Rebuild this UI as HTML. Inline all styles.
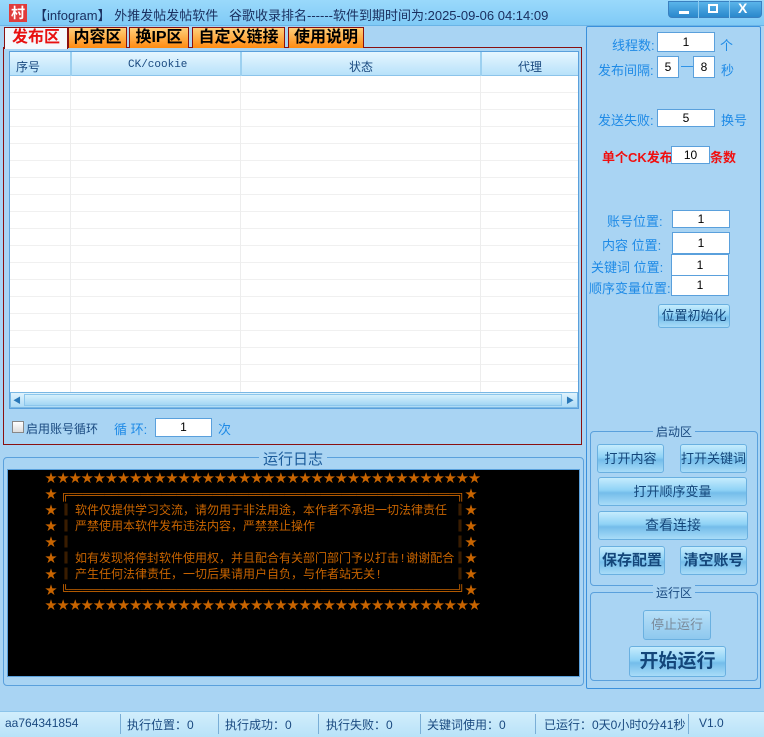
<!DOCTYPE html>
<html><head><meta charset="utf-8"><style>
*{margin:0;padding:0;box-sizing:border-box}
body{width:764px;height:737px;overflow:hidden;background:#a9d4f3;font-family:"Liberation Sans","Noto Sans CJK SC",sans-serif;font-size:12px;position:relative;color:#1a5a9a}
.a{position:absolute;white-space:nowrap}
.title{left:0;top:0;width:764px;height:26px;background:linear-gradient(#9ad9fb,#7fcaf6);border-bottom:1px solid #6ab4e6}
.tab{position:absolute;top:27px;height:21px;background:linear-gradient(#ffcf7a,#ff8a10);border:1px solid #8a1010;border-bottom:none;font-size:16px;font-weight:bold;color:#000;text-align:center;line-height:20px}
.inp{position:absolute;background:#fff;border:1px solid #5aa0dc;text-align:center;color:#000;font-size:12px}
.btn{position:absolute;border:1px solid #6ab0e0;border-radius:3px;background:linear-gradient(#c6ecfd 0%,#8fd2f6 45%,#74bdea 55%,#a8dcf8 100%);color:#14467a;text-align:center;font-size:13px}
.lbl{position:absolute;color:#1e8ae6;font-size:13px;white-space:nowrap}
.grp{position:absolute;border:1px solid #5aa0dc;border-radius:4px}
.log{color:#c86400;font-family:"Liberation Mono","Noto Sans CJK SC",monospace;font-size:12px;position:absolute;white-space:pre;line-height:16px}
.sb{position:absolute;top:714px;height:20px;border-left:1px solid #7aaed6;top:714px}
</style></head><body>
<div class="a title"></div>
<div class="a" style="left:9px;top:4px;width:18px;height:18px;background:#e03c3c;color:#fff;font-weight:bold;font-size:14px;line-height:18px;text-align:center">村</div>
<div class="a" style="left:34px;top:5px;font-size:13px;color:#1a3060">【infogram】 外推发帖发帖软件&nbsp;&nbsp;&nbsp;谷歌收录排名------软件到期时间为:2025-09-06 04:14:09</div>
<div class="a" style="left:668px;top:1px;width:94px;height:17px;background:linear-gradient(#5ab4ea,#2a88cc);border:1px solid #3a80c0;border-radius:0 0 4px 4px"></div>
<div class="a" style="left:698px;top:1px;width:1px;height:17px;background:#8ccaf0"></div>
<div class="a" style="left:729px;top:1px;width:1px;height:17px;background:#8ccaf0"></div>
<div class="a" style="left:679px;top:11px;width:10px;height:3px;background:#fff"></div>
<div class="a" style="left:708px;top:4px;width:10px;height:9px;border:2px solid #fff"></div>
<div class="a" style="left:738px;top:0px;color:#fff;font-weight:bold;font-size:14px">X</div>

<div class="a" style="left:3px;top:47px;width:579px;height:398px;border:1px solid #8a1010"></div>
<div class="tab" style="left:4px;width:64px;background:#f4f8fc;color:#e81010;height:22px">发布区</div>
<div class="tab" style="left:68px;width:59px">内容区</div>
<div class="tab" style="left:129px;width:60px">换IP区</div>
<div class="tab" style="left:192px;width:93px">自定义链接</div>
<div class="tab" style="left:288px;width:76px">使用说明</div>

<div class="a" style="left:9px;top:51px;width:570px;height:358px;background:#fff;border:1px solid #5aa0dc;
background-image:repeating-linear-gradient(#fff 0 16px,#f0f0f0 16px 17px);background-position:0 24px"></div>
<div class="a" style="left:10px;top:52px;width:568px;height:24px;background:linear-gradient(#e6f6ff,#b8e2fa);border-bottom:1px solid #8cc4ea"></div>
<div class="a" style="left:70px;top:52px;width:1px;height:340px;background:#ededed"></div>
<div class="a" style="left:240px;top:52px;width:1px;height:340px;background:#ededed"></div>
<div class="a" style="left:480px;top:52px;width:1px;height:340px;background:#ededed"></div>
<div class="a" style="left:70px;top:52px;width:2px;height:24px;background:#9cd0f0"></div>
<div class="a" style="left:240px;top:52px;width:2px;height:24px;background:#9cd0f0"></div>
<div class="a" style="left:480px;top:52px;width:2px;height:24px;background:#9cd0f0"></div>
<div class="a" style="left:16px;top:58px;color:#1a4a80">序号</div>
<div class="a" style="left:128px;top:59px;color:#1a4a80;font-family:'Liberation Mono',monospace;font-size:11px">CK/cookie</div>
<div class="a" style="left:349px;top:58px;color:#1a4a80">状态</div>
<div class="a" style="left:518px;top:58px;color:#1a4a80">代理</div>
<div class="a" style="left:10px;top:392px;width:568px;height:16px;background:linear-gradient(#dff3fd,#aedbf6);border:1px solid #7ab8e4"></div>
<div class="a" style="left:24px;top:394px;width:538px;height:12px;background:linear-gradient(#d6f0fc,#a4d6f4);border:1px solid #8cc6ec"></div>
<div class="a" style="left:13px;top:395px;font-size:8px;color:#2a78b8">◀</div>
<div class="a" style="left:566px;top:395px;font-size:8px;color:#2a78b8">▶</div>

<div class="a" style="left:12px;top:421px;width:12px;height:12px;border:1px solid #888;background:linear-gradient(#fff,#ddd)"></div>
<div class="a" style="left:26px;top:420px;color:#1a4a80;font-size:12px">启用账号循环</div>
<div class="lbl" style="left:114px;top:419px">循 环:</div>
<div class="inp" style="left:155px;top:418px;width:57px;height:19px;line-height:17px">1</div>
<div class="lbl" style="left:218px;top:419px">次</div>

<div class="grp" style="left:3px;top:457px;width:581px;height:229px"></div>
<div class="a" style="left:259px;top:448px;padding:0 4px;background:#a9d4f3;font-size:15px;color:#1a5a9a">运行日志</div>
<div class="a" style="left:7px;top:469px;width:573px;height:208px;background:#000;border:1px solid #5aa0dc"></div>
<div class="log" style="left:45px;top:471px;letter-spacing:0.1px">★★★★★★★★★★★★★★★★★★★★★★★★★★★★★★★★★★★★</div>
<div class="log" style="left:45px;top:598px;letter-spacing:0.1px">★★★★★★★★★★★★★★★★★★★★★★★★★★★★★★★★★★★★</div>
<div class="log" style="left:45px;top:487px">★
★
★
★
★
★
★</div>
<div class="log" style="left:465px;top:487px">★
★
★
★
★
★
★</div>
<div class="log" style="left:61px;top:487px;font-size:12px">╔══════════════════════════════════════════════════════╗</div>
<div class="log" style="left:61px;top:583px;font-size:12px">╚══════════════════════════════════════════════════════╝</div>
<div class="log" style="left:60px;top:503px">‖
‖
‖
‖
‖</div>
<div class="log" style="left:454px;top:503px">‖
‖
‖
‖
‖</div>
<div class="log" style="left:75px;top:503px">软件仅提供学习交流，请勿用于非法用途，本作者不承担一切法律责任
严禁使用本软件发布违法内容，严禁禁止操作

如有发现将停封软件使用权，并且配合有关部门部门予以打击!谢谢配合
产生任何法律责任，一切后果请用户自负，与作者站无关!</div>

<div class="a" style="left:586px;top:26px;width:175px;height:663px;border:1px solid #3a90dc;border-radius:2px"></div>
<div class="lbl" style="left:612px;top:35px">线程数:</div>
<div class="inp" style="left:657px;top:32px;width:58px;height:20px;line-height:18px">1</div>
<div class="lbl" style="left:720px;top:35px">个</div>
<div class="lbl" style="left:598px;top:60px">发布间隔:</div>
<div class="inp" style="left:657px;top:56px;width:22px;height:22px;line-height:20px">5</div>
<div class="lbl" style="left:681px;top:58px">—</div>
<div class="inp" style="left:693px;top:56px;width:22px;height:22px;line-height:20px">8</div>
<div class="lbl" style="left:721px;top:60px">秒</div>
<div class="lbl" style="left:598px;top:110px">发送失败:</div>
<div class="inp" style="left:657px;top:109px;width:58px;height:18px;line-height:16px">5</div>
<div class="lbl" style="left:721px;top:110px">换号</div>
<div class="a" style="left:602px;top:147px;color:#f01010;font-weight:bold;font-size:13px">单个CK发布</div>
<div class="inp" style="left:671px;top:146px;width:39px;height:18px;line-height:16px">10</div>
<div class="a" style="left:710px;top:147px;color:#f01010;font-weight:bold;font-size:13px">条数</div>
<div class="lbl" style="left:607px;top:211px">账号位置:</div>
<div class="inp" style="left:672px;top:210px;width:58px;height:18px;line-height:16px">1</div>
<div class="lbl" style="left:602px;top:235px">内容 位置:</div>
<div class="inp" style="left:672px;top:232px;width:58px;height:22px;line-height:20px">1</div>
<div class="lbl" style="left:591px;top:257px">关键词 位置:</div>
<div class="inp" style="left:671px;top:254px;width:58px;height:22px;line-height:20px">1</div>
<div class="lbl" style="left:589px;top:278px">顺序变量位置:</div>
<div class="inp" style="left:671px;top:275px;width:58px;height:21px;line-height:19px">1</div>
<div class="btn" style="left:658px;top:304px;width:72px;height:24px;line-height:22px">位置初始化</div>

<div class="grp" style="left:590px;top:431px;width:168px;height:155px"></div>
<div class="a" style="left:653px;top:423px;padding:0 3px;background:#a9d4f3;color:#1a4a80">启动区</div>
<div class="btn" style="left:597px;top:444px;width:67px;height:29px;line-height:27px">打开内容</div>
<div class="btn" style="left:680px;top:444px;width:67px;height:29px;line-height:27px">打开关键词</div>
<div class="btn" style="left:598px;top:477px;width:149px;height:29px;line-height:27px">打开顺序变量</div>
<div class="btn" style="left:598px;top:511px;width:150px;height:29px;line-height:27px;font-size:14px">查看连接</div>
<div class="btn" style="left:599px;top:546px;width:66px;height:29px;line-height:27px;font-weight:bold;font-size:15px">保存配置</div>
<div class="btn" style="left:680px;top:546px;width:67px;height:29px;line-height:27px;font-weight:bold;font-size:15px">清空账号</div>
<div class="grp" style="left:590px;top:592px;width:168px;height:89px"></div>
<div class="a" style="left:653px;top:584px;padding:0 3px;background:#a9d4f3;color:#1a4a80">运行区</div>
<div class="btn" style="left:643px;top:610px;width:68px;height:30px;line-height:28px;color:#7a8a9a;background:linear-gradient(#b8e0f8,#8ec8ee)">停止运行</div>
<div class="btn" style="left:629px;top:646px;width:97px;height:31px;line-height:29px;font-weight:bold;font-size:19px">开始运行</div>

<div class="a" style="left:0;top:711px;width:764px;height:26px;background:linear-gradient(#d2eefc,#b8e2f8);border-top:1px solid #8cc4ea"></div>
<div class="a" style="left:5px;top:716px;color:#1a4a80">aa764341854</div>
<div class="sb" style="left:120px"></div>
<div class="a" style="left:127px;top:716px;color:#1a4a80">执行位置：0</div>
<div class="sb" style="left:218px"></div>
<div class="a" style="left:225px;top:716px;color:#1a4a80">执行成功：0</div>
<div class="sb" style="left:318px"></div>
<div class="a" style="left:326px;top:716px;color:#1a4a80">执行失败：0</div>
<div class="sb" style="left:420px"></div>
<div class="a" style="left:427px;top:716px;color:#1a4a80">关键词使用：0</div>
<div class="sb" style="left:535px"></div>
<div class="a" style="left:544px;top:716px;color:#1a4a80">已运行：0天0小时0分41秒</div>
<div class="sb" style="left:688px"></div>
<div class="a" style="left:699px;top:716px;color:#1a4a80">V1.0</div>
</body></html>
